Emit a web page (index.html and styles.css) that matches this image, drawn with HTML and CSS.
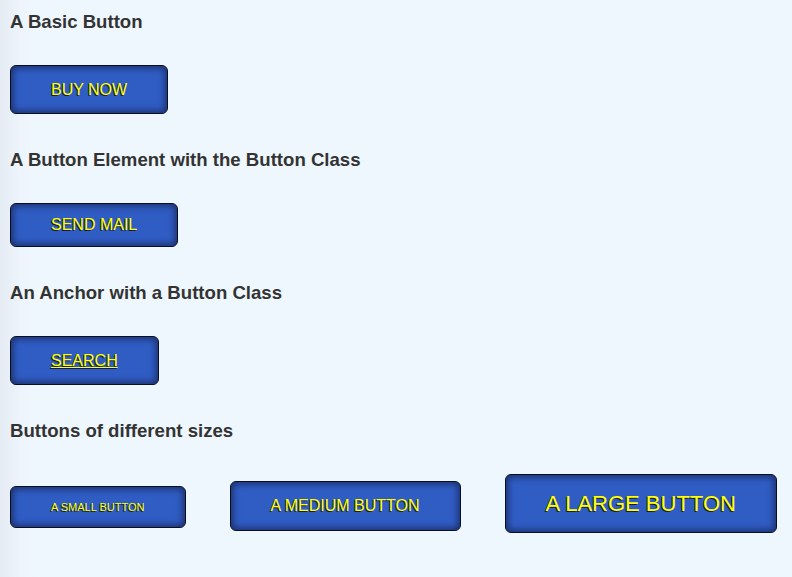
FILE: index.html
```html
<!DOCTYPE html>
<html>
<head>
<meta charset="utf-8">
<link rel="stylesheet" href="styles.css">
</head>
<body>
<h3 class="title">A Basic Button</h3>
<div class="row"><span class="button btn-basic">BUY NOW</span></div>
<h3 class="title">A Button Element with the Button Class</h3>
<div class="row"><button class="button btn-el">SEND MAIL</button></div>
<h3 class="title">An Anchor with a Button Class</h3>
<div class="row"><a class="button btn-link" href="#">SEARCH</a></div>
<h3 class="title">Buttons of different sizes</h3>
<div class="row sizes">
  <span class="button btn-small">A SMALL BUTTON</span>
  <span class="button btn-medium">A MEDIUM BUTTON</span>
  <span class="button btn-large">A LARGE BUTTON</span>
</div>
</body>
</html>
```
FILE: styles.css
```css
html, body {
  margin: 0;
  height: 100%;
}
body {
  background: linear-gradient(to right, #e4ebf2 0px, #edf4fb 20px, #eff7fe 34px) #eff7fe;
  font-family: "Liberation Sans", Arial, sans-serif;
  color: #333333;
  padding: 12px 10px 0 10px;
  box-sizing: border-box;
}
.title {
  margin: 0;
  font-size: 18.6px;
  line-height: 20px;
  font-weight: bold;
}
.row {
  display: flex;
  align-items: baseline;
  margin: 33px 0 36px 0;
}
.sizes {
  gap: 44px;
  margin-top: 33px;
}
.button {
  display: inline-block;
  box-sizing: border-box;
  font-family: "Liberation Sans", Arial, sans-serif;
  font-size: 16px;
  line-height: 19px;
  color: #ffff00;
  text-shadow: -1px 1px 0 #1c1c30;
  background: #305dc4;
  border: 1px solid #0a0f1e;
  border-radius: 6px;
  box-shadow: inset 0 0 7px 2px #1b2e68;
  padding: 14px 40px;
  text-decoration: none;
}
.btn-el {
  line-height: 18px;
  padding: 12px 40px;
  margin: 0;
  cursor: pointer;
}
.btn-link {
  text-decoration: underline;
}
.btn-small {
  font-size: 11px;
  line-height: 14px;
  padding: 13px 40px;
}
.btn-medium {
  font-size: 16px;
  line-height: 18px;
  padding: 15px 40px;
}
.btn-large {
  font-size: 22px;
  line-height: 25px;
  padding: 16px 40px;
}
```
